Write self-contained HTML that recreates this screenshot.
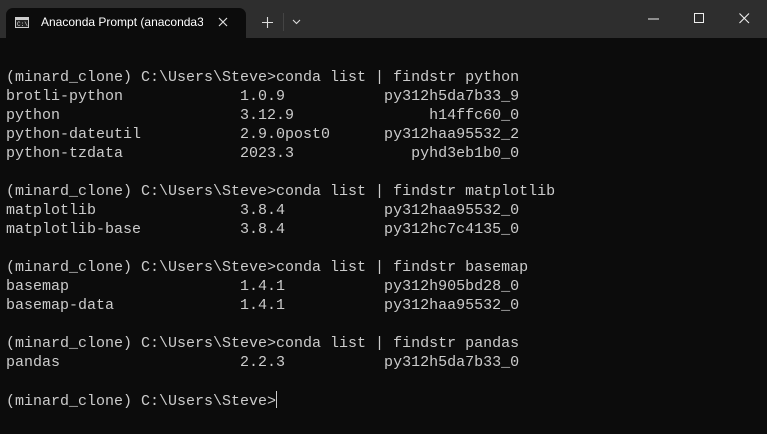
<!DOCTYPE html>
<html><head><meta charset="utf-8"><style>
html,body{margin:0;padding:0;width:767px;height:434px;overflow:hidden;background:#0c0c0c;}
.bar{position:absolute;left:0;top:0;width:767px;height:38px;background:#2e2e2e;}
.tab{position:absolute;left:6px;top:8px;width:240px;height:30px;background:#0c0c0c;border-radius:7px 7px 0 0;}
.tt{position:absolute;left:41px;top:15px;width:162px;overflow:hidden;font:12px "Liberation Sans",sans-serif;color:#fff;white-space:nowrap;}
pre{position:absolute;left:6px;top:68px;margin:0;font:15px/19px "Liberation Mono",monospace;color:#cccccc;}
.cur{display:inline-block;width:1px;height:17px;background:#ccc;vertical-align:-3px;}
</style></head><body>
<div class="bar"></div>
<div class="tab"></div>
<svg style="position:absolute;left:15px;top:17px" width="14" height="11"><rect x="0.5" y="0.5" width="13" height="10" fill="#222" stroke="#ccc"/><rect x="1" y="1" width="12" height="2" fill="#ccc"/><text x="2" y="9" font-size="6" fill="#ddd" font-family="Liberation Mono">C:\</text></svg>
<div class="tt">Anaconda Prompt (anaconda3</div>
<svg style="position:absolute;left:218px;top:17px" width="10" height="10"><path d="M1 1L9 9M9 1L1 9" stroke="#ddd" stroke-width="1.2"/></svg>
<svg style="position:absolute;left:262px;top:17px" width="11" height="11"><path d="M5.5 0V11M0 5.5H11" stroke="#ddd" stroke-width="1.1"/></svg>
<div style="position:absolute;left:283px;top:13px;width:1px;height:18px;background:#444"></div>
<svg style="position:absolute;left:292px;top:19px" width="9" height="6"><path d="M1 1L4.5 4.5L8 1" stroke="#ddd" fill="none" stroke-width="1.1"/></svg>
<svg style="position:absolute;left:648px;top:18px" width="11" height="2"><path d="M0 1H11" stroke="#eee" stroke-width="1"/></svg>
<svg style="position:absolute;left:694px;top:13px" width="11" height="11"><rect x="0.5" y="0.5" width="9" height="9" fill="none" stroke="#eee"/></svg>
<svg style="position:absolute;left:739px;top:13px" width="11" height="11"><path d="M0.5 0.5L10 10M10 0.5L0.5 10" stroke="#eee" stroke-width="1.1"/></svg>
<pre>(minard_clone) C:\Users\Steve>conda list | findstr python
brotli-python             1.0.9           py312h5da7b33_9
python                    3.12.9               h14ffc60_0
python-dateutil           2.9.0post0      py312haa95532_2
python-tzdata             2023.3             pyhd3eb1b0_0

(minard_clone) C:\Users\Steve>conda list | findstr matplotlib
matplotlib                3.8.4           py312haa95532_0
matplotlib-base           3.8.4           py312hc7c4135_0

(minard_clone) C:\Users\Steve>conda list | findstr basemap
basemap                   1.4.1           py312h905bd28_0
basemap-data              1.4.1           py312haa95532_0

(minard_clone) C:\Users\Steve>conda list | findstr pandas
pandas                    2.2.3           py312h5da7b33_0

(minard_clone) C:\Users\Steve><span class="cur"></span></pre>
</body></html>
